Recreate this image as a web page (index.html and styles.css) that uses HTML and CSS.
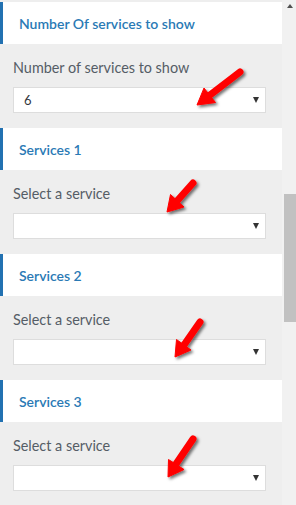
FILE: index.html
```html
<!DOCTYPE html>
<html>
<head>
    <meta charset="utf-8">
    <title>Services widget</title>
    <link rel="stylesheet" href="styles.css">
</head>
<body>
    <div class="frame">
        <div class="panel">
            <div class="section">
                <h3 class="section-title">Number Of services to show</h3>
                <div class="section-body">
                    <label class="field-label">Number of services to show</label>
                    <div class="select"><span class="value">6</span><span class="caret"></span></div>
                </div>
            </div>
            <div class="section">
                <h3 class="section-title">Services 1</h3>
                <div class="section-body">
                    <label class="field-label">Select a service</label>
                    <div class="select"><span class="value"></span><span class="caret"></span></div>
                </div>
            </div>
            <div class="section">
                <h3 class="section-title">Services 2</h3>
                <div class="section-body">
                    <label class="field-label">Select a service</label>
                    <div class="select"><span class="value"></span><span class="caret"></span></div>
                </div>
            </div>
            <div class="section">
                <h3 class="section-title">Services 3</h3>
                <div class="section-body">
                    <label class="field-label">Select a service</label>
                    <div class="select"><span class="value"></span><span class="caret"></span></div>
                </div>
            </div>
        </div>
        <div class="scrollbar">
            <span class="scroll-up"></span>
            <div class="thumb"></div>
        </div>
    </div>

    <!-- red annotation arrows drawn over the screenshot -->
    <svg class="arrows" width="296" height="505" viewBox="0 0 296 505">
        <defs>
            <filter id="shadow" x="-30%" y="-30%" width="160%" height="160%">
                <feDropShadow dx="2" dy="2" stdDeviation="1.5" flood-color="#000" flood-opacity="0.55"/>
            </filter>
        </defs>
        <g fill="#f00" stroke="#f00" filter="url(#shadow)">
            <line x1="240" y1="72" x2="210" y2="95" stroke-width="7" stroke-linecap="round"/>
            <polygon points="197,105 215.5,102.5 204,88" stroke-width="1" stroke-linejoin="round"/>

            <line x1="193" y1="183" x2="177" y2="201" stroke-width="7" stroke-linecap="round"/>
            <polygon points="167,212 184,207 170.5,194.5" stroke-width="1" stroke-linejoin="round"/>

            <line x1="200" y1="322" x2="184" y2="345" stroke-width="7" stroke-linecap="round"/>
            <polygon points="175,357 191,350 176.5,339.5" stroke-width="1" stroke-linejoin="round"/>

            <line x1="193" y1="439" x2="176" y2="464" stroke-width="7" stroke-linecap="round"/>
            <polygon points="168,477 184,469.5 168.5,459.5" stroke-width="1" stroke-linejoin="round"/>
        </g>
    </svg>
</body>
</html>
```

FILE: styles.css
```css
body {
    margin: 0;
    background: #eeeeee;
    font-family: Lato, "Open Sans", sans-serif;
}
.frame {
    display: flex;
    width: 296px;
    height: 505px;
    overflow: hidden;
}
.panel {
    width: 282px;
    padding-top: 2px;
    background: #eeeeee;
}
.section-title {
    margin: 0;
    height: 42px;
    box-sizing: border-box;
    padding: 12px 0 0 16px;
    background: #fff;
    border-left: 3px solid #2271b1;
    color: #2a7ab5;
    font-size: 14px;
    font-weight: 600;
    line-height: 20px;
}
.section-body {
    padding: 14px 16px 15px 13px;
}
.field-label {
    display: block;
    color: #555d66;
    font-size: 14.4px;
    line-height: 20px;
    margin-bottom: 9px;
}
.select {
    display: flex;
    align-items: center;
    justify-content: space-between;
    height: 26px;
    box-sizing: border-box;
    border: 1px solid #dddddd;
    background: #fff;
    padding: 0 6px 0 10px;
}
.value {
    color: #32373c;
    font-size: 13px;
}
.caret {
    width: 0;
    height: 0;
    border-left: 3px solid transparent;
    border-right: 3px solid transparent;
    border-top: 6px solid #333;
}
.scrollbar {
    position: relative;
    width: 14px;
    background: #f1f1f1;
}
.scroll-up {
    position: absolute;
    top: 4px;
    left: 5px;
    width: 0;
    height: 0;
    border-left: 3px solid transparent;
    border-right: 3px solid transparent;
    border-bottom: 4px solid #505050;
}
.thumb {
    margin: 194px 0 0 2px;
    width: 12px;
    height: 128px;
    background: #c1c1c1;
}
.arrows {
    position: absolute;
    top: 0;
    left: 0;
    pointer-events: none;
}
```
